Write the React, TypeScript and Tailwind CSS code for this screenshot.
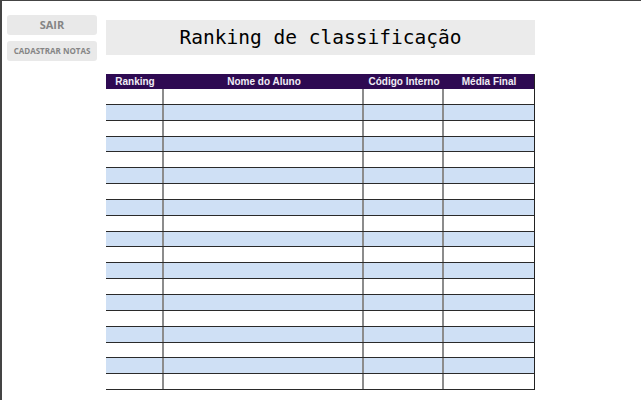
import React from "react";

const rows = Array.from({ length: 19 }, (_, i) => i);

function SideButton({ label, small }: { label: string; small?: boolean }) {
  return (
    <button
      className={
        "w-[90px] h-[20px] rounded-[3px] bg-[#e9e9e9] font-bold text-[#858585] flex items-center justify-center " +
        (small ? "text-[8px]" : "text-[11px]")
      }
      style={{ fontFamily: '"Open Sans", sans-serif' }}
    >
      {label}
    </button>
  );
}

export default function App() {
  return (
    <div className="w-[641px] h-[400px] bg-white border-t border-l-2 border-[#444] flex overflow-hidden">
      {/* Menu lateral */}
      <div className="flex flex-col gap-[6px] pl-[5px] pt-[14px] w-[104px] shrink-0">
        <SideButton label="SAIR" />
        <SideButton label="CADASTRAR NOTAS" small />
      </div>

      <div className="flex flex-col pt-[19px] w-[429px]">
        <div
          className="h-[35px] bg-[#ebebeb] flex items-center justify-center text-[19.5px] text-black"
          style={{ fontFamily: '"DejaVu Sans Mono", monospace' }}
        >
          Ranking de classificação
        </div>

        <div className="mt-[19px] border-r border-[#222]" style={{ fontFamily: '"Liberation Sans", Arial, sans-serif' }}>
          <div className="flex h-[15px] bg-[#2e0a52] text-[10px] font-bold text-[#f0ecf5] items-center">
            <div className="w-[58px] text-center">Ranking</div>
            <div className="w-[200px] text-center">Nome do Aluno</div>
            <div className="w-[80px] text-center">Código Interno</div>
            <div className="flex-1 text-center">Média Final</div>
          </div>
          {rows.map((r) => (
            <div
              key={r}
              className={
                "flex h-[15.85px] border-b border-[#2a2a2a] " +
                (r % 2 === 1 ? "bg-[#cfe0f5]" : "bg-white")
              }
            >
              <div className="w-[58px] border-r-2 border-[#8c8c8c]" />
              <div className="w-[200px] border-r-2 border-[#8c8c8c]" />
              <div className="w-[80px] border-r-2 border-[#8c8c8c]" />
              <div className="flex-1" />
            </div>
          ))}
        </div>
      </div>
    </div>
  );
}
